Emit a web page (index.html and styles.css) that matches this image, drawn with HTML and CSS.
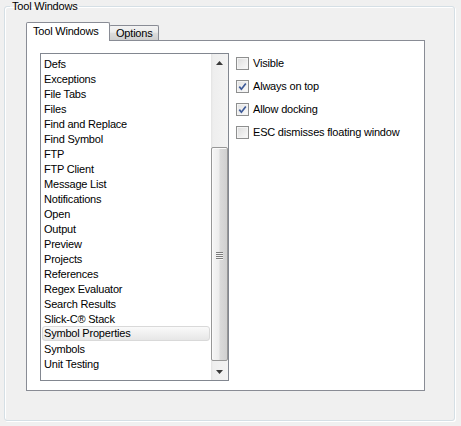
FILE: index.html
```html
<!DOCTYPE html>
<html>
<head>
<meta charset="utf-8">
<link rel="stylesheet" href="styles.css">
</head>
<body>
<fieldset class="group">
  <legend class="group-title">Tool Windows</legend>
  <div class="tab-strip">
    <div class="tab tab-active">Tool Windows</div>
    <div class="tab tab-inactive">Options</div>
  </div>
  <div class="pane">
    <div class="listbox">
      <ul class="items">
        <li>Defs</li>
        <li>Exceptions</li>
        <li>File Tabs</li>
        <li>Files</li>
        <li>Find and Replace</li>
        <li>Find Symbol</li>
        <li>FTP</li>
        <li>FTP Client</li>
        <li>Message List</li>
        <li>Notifications</li>
        <li>Open</li>
        <li>Output</li>
        <li>Preview</li>
        <li>Projects</li>
        <li>References</li>
        <li>Regex Evaluator</li>
        <li>Search Results</li>
        <li>Slick-C® Stack</li>
        <li class="selected">Symbol Properties</li>
        <li>Symbols</li>
        <li>Unit Testing</li>
      </ul>
      <div class="scrollbar">
        <div class="sb-btn">
          <svg width="7" height="4" viewBox="0 0 7 4"><polygon points="3.5,0 7,4 0,4" fill="#3a3a3a"/></svg>
        </div>
        <div class="sb-track">
          <div class="sb-space-top"></div>
          <div class="sb-thumb">
            <div class="grip"><span></span><span></span><span></span><span></span></div>
          </div>
        </div>
        <div class="sb-btn">
          <svg width="7" height="4" viewBox="0 0 7 4"><polygon points="0,0 7,0 3.5,4" fill="#3a3a3a"/></svg>
        </div>
      </div>
    </div>
    <div class="options">
      <label class="check"><span class="box"></span>Visible</label>
      <label class="check"><span class="box checked"><svg width="9" height="9" viewBox="0 0 9 9"><path d="M1.3 4.6 L3.4 7.2 L7.8 1.4" fill="none" stroke="#3d5a98" stroke-width="1.7"/></svg></span>Always on top</label>
      <label class="check"><span class="box checked"><svg width="9" height="9" viewBox="0 0 9 9"><path d="M1.3 4.6 L3.4 7.2 L7.8 1.4" fill="none" stroke="#3d5a98" stroke-width="1.7"/></svg></span>Allow docking</label>
      <label class="check"><span class="box"></span>ESC dismisses floating window</label>
    </div>
  </div>
</fieldset>
</body>
</html>
```

FILE: styles.css
```css
html, body {
  margin: 0;
  padding: 0;
  background: #f0f0f0;
}

body {
  font-family: "Liberation Sans", Arial, sans-serif;
  font-size: 11px;
  line-height: 13px;
  letter-spacing: -0.2px;
  color: #000;
  width: 461px;
  height: 426px;
  overflow: hidden;
}

.group {
  margin: 0 6px 5px 4px;
  padding: 9px 29px 29px 21px;
  border: 1px solid #d5dfe5;
  border-radius: 3px;
  box-shadow: inset 1px 1px 0 #fff, 1px 1px 0 #fff;
  min-width: 0;
  height: 421px;
  box-sizing: border-box;
}

.group-title {
  padding: 0 2px;
  margin-left: -16px;
  line-height: 13px;
}

.tab-strip {
  display: flex;
  align-items: flex-end;
  height: 18px;
}

.tab {
  box-sizing: border-box;
  border: 1px solid #898c95;
  border-bottom: none;
  white-space: nowrap;
}

.tab-active {
  width: 84px;
  height: 19px;
  margin-bottom: -1px;
  padding: 2px 0 0 6px;
  background: #fff;
  border-radius: 2px 2px 0 0;
  position: relative;
  z-index: 1;
}

.tab-inactive {
  width: 50px;
  height: 15px;
  margin-left: -1px;
  padding: 1px 0 0 6px;
  background: linear-gradient(to bottom, #f3f3f3 0%, #ebebeb 45%, #dddddd 50%, #cfcfcf 100%);
  border-radius: 2px 2px 0 0;
}

.pane {
  box-sizing: border-box;
  height: 351px;
  border: 1px solid #898c95;
  background: #fff;
  padding: 12px 0 9px 13px;
  display: flex;
  gap: 7px;
}

.listbox {
  box-sizing: border-box;
  width: 189px;
  height: 328px;
  border: 1px solid #828790;
  display: flex;
}

.items {
  list-style: none;
  margin: 0;
  padding: 2px 1px 0 1px;
  flex: 1;
}

.items li {
  height: 15px;
  line-height: 14px;
  padding: 1px 0 0 2px;
  box-sizing: border-box;
}

.items li.selected {
  border: 1px solid #d9d9d9;
  border-radius: 3px;
  background: linear-gradient(to bottom, #fafafa, #e6e6e6);
  line-height: 13px;
  padding: 0 0 0 1px;
}

.scrollbar {
  width: 17px;
  display: flex;
  flex-direction: column;
  background: linear-gradient(to right, #e3e3e3 0px, #eeeeee 2px, #f3f3f3 100%);
}

.sb-btn {
  height: 17px;
  display: flex;
  align-items: center;
  justify-content: center;
}

.sb-track {
  flex: 1;
  display: flex;
  flex-direction: column;
}

.sb-space-top {
  height: 76px;
}

.sb-thumb {
  box-sizing: border-box;
  height: 214px;
  border: 1px solid #979797;
  border-radius: 2px;
  background: linear-gradient(to right, #f6f6f6 0%, #ededed 45%, #dadada 55%, #d0d0d0 100%);
  box-shadow: inset 1px 1px 0 #fafafa;
  display: flex;
  align-items: center;
  justify-content: center;
}

.grip {
  display: flex;
  flex-direction: column;
  gap: 1px;
  margin-top: 2px;
}

.grip span {
  display: block;
  width: 7px;
  height: 1px;
  background: #7c7c7c;
  box-shadow: 0 1px 0 #f4f4f4;
}

.options {
  display: flex;
  flex-direction: column;
  padding-top: 4px;
  gap: 10px;
}

.check {
  display: flex;
  align-items: center;
  gap: 4px;
  height: 13px;
  white-space: nowrap;
}

.box {
  box-sizing: border-box;
  width: 13px;
  height: 13px;
  border: 1px solid #8e8f8f;
  background: linear-gradient(135deg, #dcdcdc, #fbfbfb);
  box-shadow: inset 0 0 0 1px #f4f4f4;
  display: flex;
  align-items: center;
  justify-content: center;
}

.box.checked {
  background: linear-gradient(135deg, #e2e2e2, #fbfbfb);
}
```
